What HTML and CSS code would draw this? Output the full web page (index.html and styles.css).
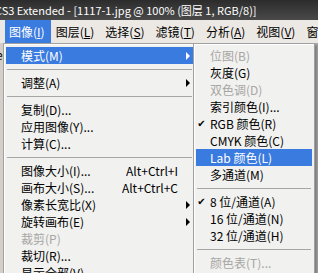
FILE: index.html
```html
<!DOCTYPE html>
<html lang="zh-CN">
<head>
<meta charset="utf-8">
<title>图像菜单</title>
<link rel="stylesheet" href="styles.css">
</head>
<body>
<div class="window">
  <div class="titlebar"><span class="title">CS3 Extended - [1117-1.jpg @ 100% (图层 1, RGB/8)]</span></div>
  <div class="menubar">
    <span class="mb-item active">图像(<u>I</u>)</span>
    <span class="mb-item">图层(<u>L</u>)</span>
    <span class="mb-item">选择(<u>S</u>)</span>
    <span class="mb-item">滤镜(<u>T</u>)</span>
    <span class="mb-item">分析(<u>A</u>)</span>
    <span class="mb-item">视图(<u>V</u>)</span>
    <span class="mb-item">窗口(<u>W</u>)</span>
  </div>
  <div class="workspace">
    <div class="panel-edge"><span>e</span></div>
    <div class="menu main-menu">
      <div class="item hl has-sub"><span class="label">模式(M)</span><span class="arrow"></span></div>
      <div class="sep"></div>
      <div class="item has-sub"><span class="label">调整(A)</span><span class="arrow"></span></div>
      <div class="sep"></div>
      <div class="item"><span class="label">复制(D)...</span></div>
      <div class="item"><span class="label">应用图像(Y)...</span></div>
      <div class="item"><span class="label">计算(C)...</span></div>
      <div class="sep"></div>
      <div class="item"><span class="label">图像大小(I)...</span><span class="key">Alt+Ctrl+I</span></div>
      <div class="item"><span class="label">画布大小(S)...</span><span class="key">Alt+Ctrl+C</span></div>
      <div class="item has-sub"><span class="label">像素长宽比(X)</span><span class="arrow"></span></div>
      <div class="item has-sub"><span class="label">旋转画布(E)</span><span class="arrow"></span></div>
      <div class="item disabled"><span class="label">裁剪(P)</span></div>
      <div class="item"><span class="label">裁切(R)...</span></div>
      <div class="item"><span class="label">显示全部(V)</span></div>
    </div>
    <div class="menu sub-menu">
      <div class="item disabled"><span class="check"></span><span class="label">位图(B)</span></div>
      <div class="item"><span class="check"></span><span class="label">灰度(G)</span></div>
      <div class="item disabled"><span class="check"></span><span class="label">双色调(D)</span></div>
      <div class="item"><span class="check"></span><span class="label">索引颜色(I)...</span></div>
      <div class="item"><span class="check">&#10004;</span><span class="label">RGB 颜色(R)</span></div>
      <div class="item"><span class="check"></span><span class="label">CMYK 颜色(C)</span></div>
      <div class="item hl"><span class="check"></span><span class="label">Lab 颜色(L)</span></div>
      <div class="item"><span class="check"></span><span class="label">多通道(M)</span></div>
      <div class="sep"></div>
      <div class="item"><span class="check">&#10004;</span><span class="label">8 位/通道(A)</span></div>
      <div class="item"><span class="check"></span><span class="label">16 位/通道(N)</span></div>
      <div class="item"><span class="check"></span><span class="label">32 位/通道(H)</span></div>
      <div class="sep"></div>
      <div class="item disabled"><span class="check"></span><span class="label">颜色表(T)...</span></div>
    </div>
  </div>
</div>
</body>
</html>
```

FILE: styles.css
```css
* { box-sizing: border-box; }
html, body {
  margin: 0;
  padding: 0;
  width: 318px;
  height: 273px;
  overflow: hidden;
  background: #9a9a9a;
}
body {
  font-family: "Noto Sans CJK SC", "Liberation Sans", sans-serif;
  font-size: 12px;
  color: #000;
}
.window {
  width: 318px;
  height: 273px;
  display: flex;
  flex-direction: column;
}
.titlebar {
  height: 20px;
  flex: none;
  background: linear-gradient(#2c2c2c, #4a4a4a);
  color: #fff;
  font-size: 11px;
  line-height: 20px;
  white-space: nowrap;
  overflow: hidden;
}
.title { margin-left: -5px; }
.menubar {
  height: 23px;
  flex: none;
  background: #ece9e4;
  display: flex;
  align-items: stretch;
  padding-left: 5px;
  white-space: nowrap;
  overflow: hidden;
}
.mb-item {
  display: flex;
  align-items: center;
  padding: 0 6px 0 4px;
  margin-right: 1px;
  line-height: 20px;
}
.mb-item.active {
  background: #3a7be0;
  color: #fff;
}
.workspace {
  flex: 1;
  position: relative;
  background: #a8a8a8;
}
.panel-edge {
  width: 3px;
  height: 100%;
  background: #d4d0c8;
  overflow: hidden;
  padding-top: 4px;
  line-height: 16px;
}
.panel-edge span { margin-left: -4px; }
.menu {
  position: absolute;
  top: 0;
  background: #f1f1ef;
  border: 1px solid #a0a0a0;
  box-shadow: inset 1px 1px 0 #fff, 2px 2px 2px rgba(0,0,0,0.25);
  padding: 3px 2px;
}
.main-menu {
  left: 3px;
  width: 193px;
}
.sub-menu {
  left: 193px;
  width: 122px;
  z-index: 2;
}
.item {
  height: 17px;
  display: flex;
  align-items: center;
  white-space: nowrap;
  position: relative;
}
.item .label, .item .key, .item .check {
  display: block;
  line-height: 17px;
  height: 17px;
  overflow: hidden;
}
.main-menu .item { padding-left: 15px; padding-right: 15px; }
.item .label { flex: 1; }
.item.hl { background: #3a7be0; color: #fff; }
.item.disabled { color: #a7a6a4; }
.arrow {
  position: absolute;
  right: 3px;
  top: 5px;
  width: 0;
  height: 0;
  border-top: 4px solid transparent;
  border-bottom: 4px solid transparent;
  border-left: 4px solid #000;
}
.item.hl .arrow { border-left-color: #fff; }
.sub-menu .item { padding-left: 0; }
.check {
  width: 11px;
  margin-right: 3px;
  flex: none;
  font-family: "DejaVu Sans", sans-serif;
  font-size: 10px;
  text-align: center;
}
.sep {
  height: 10px;
  display: flex;
  align-items: center;
}
.sep::before {
  content: "";
  flex: 1;
  height: 1px;
  margin: 0 1px;
  background: #a6a6a6;
}
```
